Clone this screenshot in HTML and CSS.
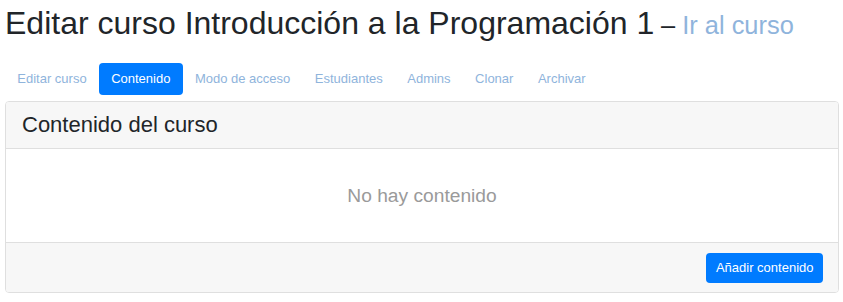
FILE: index.html
```html
<!DOCTYPE html>
<html lang="es">
<head>
<meta charset="utf-8">
<title>Editar curso</title>
<link rel="stylesheet" href="styles.css">
</head>
<body>
<div class="page">
  <h1 class="title">Editar curso Introducción a la Programación 1 <small class="sub">– <a class="sub-link" href="#">Ir al curso</a></small></h1>
  <nav class="tabs">
    <a class="tab" href="#">Editar curso</a>
    <a class="tab active" href="#">Contenido</a>
    <a class="tab" href="#">Modo de acceso</a>
    <a class="tab" href="#">Estudiantes</a>
    <a class="tab" href="#">Admins</a>
    <a class="tab" href="#">Clonar</a>
    <a class="tab" href="#">Archivar</a>
  </nav>
  <section class="card">
    <header class="card-header">Contenido del curso</header>
    <div class="card-body">No hay contenido</div>
    <footer class="card-footer">
      <button class="btn" type="button">Añadir contenido</button>
    </footer>
  </section>
</div>
</body>
</html>
```

FILE: styles.css
```css
* { box-sizing: border-box; }
html, body { margin: 0; padding: 0; background: #fff; }
body {
  font-family: "Liberation Sans", Arial, sans-serif;
  color: #212529;
}
.page {
  margin: 0 4px 0 5px;
}
.title {
  margin: 4px 0 19px 0;
  font-size: 32px;
  line-height: 38px;
  font-weight: 400;
  color: #212529;
}
.sub {
  display: inline-block;
  margin-left: -2px;
  font-size: 25.4px;
  color: #212529;
}
.sub-link {
  color: #8fb4dc;
  text-decoration: none;
}
.tabs {
  display: flex;
  margin-bottom: 6px;
}
.tab {
  display: block;
  padding: 6px 12.25px;
  font-size: 13px;
  line-height: 20px;
  color: #8fb4dc;
  text-decoration: none;
  border-radius: 4px;
}
.tab.active {
  background: #007bff;
  color: #fff;
}
.card {
  border: 1px solid #dfdfdf;
  border-radius: 4px;
  overflow: hidden;
}
.card-header {
  background: #f7f7f7;
  border-bottom: 1px solid #dfdfdf;
  padding: 12px 16px;
  font-size: 22px;
  line-height: 22px;
}
.card-body {
  height: 93px;
  display: flex;
  align-items: center;
  justify-content: center;
  font-size: 19.2px;
  color: #9a9a9a;
}
.card-footer {
  background: #f7f7f7;
  border-top: 1px solid #dfdfdf;
  padding: 10px 15px 9px;
  display: flex;
  justify-content: flex-end;
}
.btn {
  font-family: "Liberation Sans", Arial, sans-serif;
  font-size: 13px;
  line-height: 20px;
  padding: 5px 9.5px;
  border: 0;
  border-radius: 4px;
  background: #007bff;
  color: #fff;
}
```
